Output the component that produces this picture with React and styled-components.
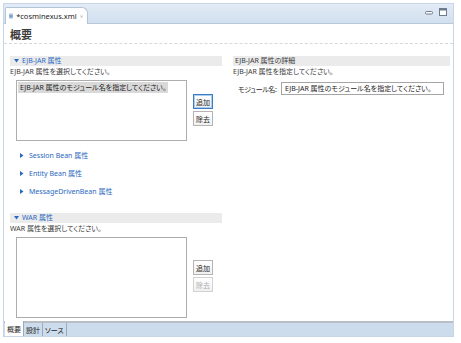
import React from "react";
import styled, { createGlobalStyle } from "styled-components";

const GlobalStyle = createGlobalStyle`
  html, body {
    margin: 0;
    padding: 0;
    background: #ffffff;
  }
  body {
    font-family: "Noto Sans", "Noto Sans CJK JP", sans-serif;
    font-feature-settings: "palt";
    font-size: 7px;
    color: #2b2b2b;
    white-space: nowrap;
  }
`;

const Window = styled.div`
  margin: 3px 0 0 3px;
  width: 451px;
  height: 334px;
  border: 1px solid #c7d5e5;
  display: flex;
  flex-direction: column;
  box-sizing: border-box;
`;

const TabStrip = styled.div`
  height: 19px;
  display: flex;
  align-items: flex-end;
  padding-left: 1px;
  background: linear-gradient(#e2ebf6, #d1dfee);
  border-bottom: 1px solid #b9c9dc;
  position: relative;
`;

const EditorTab = styled.div`
  height: 17px;
  width: 83px;
  box-sizing: border-box;
  margin-bottom: -1px;
  background: #ffffff;
  border: 1px solid #b3c4d8;
  border-bottom: none;
  border-radius: 2px 6px 0 0;
  display: flex;
  align-items: center;
  padding: 0 4px 0 3px;
  gap: 3px;
  font-size: 7.5px;
  color: #1e1e1e;
`;

const TabTitle = styled.span`
  flex: 1;
`;

const WindowControls = styled.div`
  position: absolute;
  right: 6px;
  top: 4px;
  display: flex;
  gap: 6px;
  align-items: center;
`;

const Content = styled.div`
  flex: 1;
  background: #ffffff;
  display: flex;
  flex-direction: column;
`;

const TitleRow = styled.div`
  height: 19px;
  padding-left: 6px;
  display: flex;
  align-items: center;
  font-size: 11px;
  font-weight: 700;
  color: #3c3c3c;
  border-bottom: 1px dashed #d8d8d8;
`;

const Columns = styled.div`
  display: grid;
  grid-template-columns: 212px 217px;
  column-gap: 11px;
  padding: 12px 0 0 6px;
`;

const Column = styled.div`
  display: flex;
  flex-direction: column;
`;

const SectionHeader = styled.div`
  height: 10px;
  background: #ebebeb;
  display: flex;
  align-items: center;
  gap: 3px;
  padding-left: ${(p) => (p.$expandable ? "4px" : "2px")};
  color: ${(p) => (p.$expandable ? "#2a68c0" : "#3a3a3a")};
  line-height: 10px;
`;

const Description = styled.div`
  height: 13px;
  line-height: 12px;
  color: #3a3a3a;
`;

const ListRow = styled.div`
  display: flex;
  gap: 6px;
  padding: 1px 0 0 6px;
`;

const ListBox = styled.div`
  width: 171px;
  height: ${(p) => p.$height}px;
  box-sizing: border-box;
  border: 1px solid #adadad;
  padding: 1px;
  background: #fff;
`;

const ListItem = styled.div`
  display: inline-block;
  background: #d9d9d9;
  padding: 0 2px;
  height: 11px;
  line-height: 11px;
  color: #1e1e1e;
`;

const ButtonColumn = styled.div`
  display: flex;
  flex-direction: column;
  gap: 2px;
  padding-top: ${(p) => p.$offset}px;
`;

const SmallButton = styled.button`
  width: 20px;
  height: 15px;
  padding: 0;
  box-sizing: border-box;
  font-family: inherit;
  font-size: 7px;
  background: linear-gradient(#ffffff, #f0f0f0);
  border: 1px solid ${(p) => (p.$focused ? "#3d7bc4" : p.$disabled ? "#d2d2d2" : "#b4b4b4")};
  box-shadow: ${(p) => (p.$focused ? "inset 0 0 0 1px #a8cdf0" : "none")};
  color: ${(p) => (p.$disabled ? "#b0b0b0" : "#1e1e1e")};
`;

const Collapsed = styled.div`
  display: flex;
  flex-direction: column;
  padding: 5px 0 0 10px;
  height: 72px;
  box-sizing: border-box;
`;

const CollapsedItem = styled.div`
  height: 18px;
  display: flex;
  align-items: center;
  gap: 5px;
  color: #2a68c0;
`;

const FieldRow = styled.div`
  display: flex;
  align-items: center;
  gap: 5px;
  padding: 3px 0 0 5px;
`;

const Label = styled.span`
  width: 38px;
  letter-spacing: -0.4px;
  color: #2b2b2b;
`;

const TextInput = styled.div`
  width: 163px;
  height: 13px;
  box-sizing: border-box;
  border: 1px solid #a5a5a5;
  padding-left: 3px;
  line-height: 11px;
  color: #1e1e1e;
`;

const Spacer = styled.div`
  flex: 1;
`;

const BottomTabs = styled.div`
  height: 13px;
  display: flex;
  align-items: stretch;
  background: #cddcec;
  border-top: 2px solid #b9bec5;
  padding-left: 1px;
`;

const PageTab = styled.div`
  padding: 0 2px;
  display: flex;
  align-items: center;
  color: #1e1e1e;
  background: ${(p) => (p.$active ? "#ffffff" : "transparent")};
  border-right: 1px solid #9aa9bb;
  margin-top: ${(p) => (p.$active ? "-2px" : "0")};
`;

function XmlIcon() {
  return (
    <svg width="9" height="10" viewBox="0 0 9 10">
      <rect x="0.5" y="0.5" width="8" height="9" fill="#fff" stroke="#7d8ea5" />
      <rect x="1.5" y="2" width="6" height="6" rx="1" fill="#3f78c2" />
      <circle cx="4.5" cy="5" r="1.4" fill="#d7e6f6" />
    </svg>
  );
}

function CloseIcon() {
  return (
    <svg width="7" height="7" viewBox="0 0 7 7">
      <rect x="0.5" y="0.5" width="6" height="6" fill="none" stroke="#b9b9b9" strokeDasharray="1 1" />
      <path d="M2 2 L5 5 M5 2 L2 5" stroke="#8f8f8f" strokeWidth="1" />
    </svg>
  );
}

function MinimizeIcon() {
  return (
    <svg width="8" height="5" viewBox="0 0 8 5">
      <rect x="0.5" y="1.5" width="7" height="2.5" rx="1" fill="#fff" stroke="#6c7b8e" />
    </svg>
  );
}

function MaximizeIcon() {
  return (
    <svg width="8" height="8" viewBox="0 0 8 8">
      <rect x="0.5" y="0.5" width="7" height="7" fill="#fff" stroke="#6c7b8e" />
      <rect x="0.5" y="0.5" width="7" height="2" fill="#6c7b8e" />
    </svg>
  );
}

function Triangle({ open }) {
  return open ? (
    <svg width="5" height="4" viewBox="0 0 5 4">
      <path d="M0 0 L5 0 L2.5 3.5 Z" fill="#2a68c0" />
    </svg>
  ) : (
    <svg width="4" height="5" viewBox="0 0 4 5">
      <path d="M0 0 L3.5 2.5 L0 5 Z" fill="#2a68c0" />
    </svg>
  );
}

const beanSections = [
  "Session Bean 属性",
  "Entity Bean 属性",
  "MessageDrivenBean 属性",
];

export default function App() {
  return (
    <>
      <GlobalStyle />
      <Window>
        <TabStrip>
          <EditorTab>
            <XmlIcon />
            <TabTitle>*cosminexus.xml</TabTitle>
            <CloseIcon />
          </EditorTab>
          <WindowControls>
            <MinimizeIcon />
            <MaximizeIcon />
          </WindowControls>
        </TabStrip>
        <Content>
          <TitleRow>概要</TitleRow>
          <Columns>
            <Column>
              <SectionHeader $expandable>
                <Triangle open />
                EJB-JAR 属性
              </SectionHeader>
              <Description>EJB-JAR 属性を選択してください。</Description>
              <ListRow>
                <ListBox $height={61}>
                  <ListItem>EJB-JAR 属性のモジュール名を指定してください。</ListItem>
                </ListBox>
                <ButtonColumn $offset={14}>
                  <SmallButton $focused>追加</SmallButton>
                  <SmallButton>除去</SmallButton>
                </ButtonColumn>
              </ListRow>
              <Collapsed>
                {beanSections.map((name) => (
                  <CollapsedItem key={name}>
                    <Triangle />
                    {name}
                  </CollapsedItem>
                ))}
              </Collapsed>
              <SectionHeader $expandable>
                <Triangle open />
                WAR 属性
              </SectionHeader>
              <Description>WAR 属性を選択してください。</Description>
              <ListRow>
                <ListBox $height={81} />
                <ButtonColumn $offset={23}>
                  <SmallButton>追加</SmallButton>
                  <SmallButton $disabled>除去</SmallButton>
                </ButtonColumn>
              </ListRow>
            </Column>
            <Column>
              <SectionHeader>EJB-JAR 属性の詳細</SectionHeader>
              <Description>EJB-JAR 属性を指定してください。</Description>
              <FieldRow>
                <Label>モジュール名:</Label>
                <TextInput>EJB-JAR 属性のモジュール名を指定してください。</TextInput>
              </FieldRow>
            </Column>
          </Columns>
          <Spacer />
        </Content>
        <BottomTabs>
          <PageTab $active>概要</PageTab>
          <PageTab>設計</PageTab>
          <PageTab>ソース</PageTab>
        </BottomTabs>
      </Window>
    </>
  );
}
